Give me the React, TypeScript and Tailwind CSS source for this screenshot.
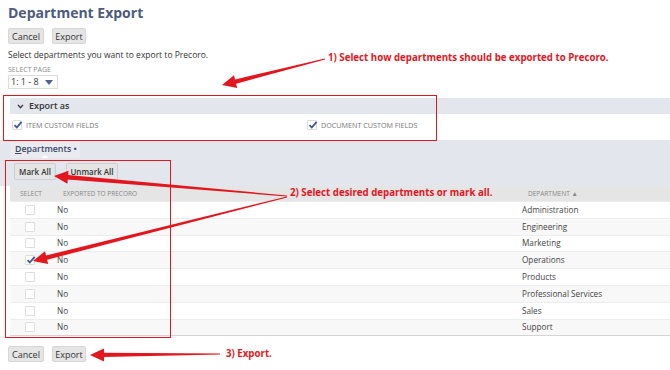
import React from 'react';

const departments = [
  'Administration',
  'Engineering',
  'Marketing',
  'Operations',
  'Products',
  'Professional Services',
  'Sales',
  'Support',
];

function Btn({ children, w }: { children: React.ReactNode; w: string }) {
  return (
    <button
      className={
        'h-[16px] rounded-[2px] bg-[#e5e5e5] border border-[#d6d6d6] text-[9px] leading-none text-[#333] flex items-center justify-center ' +
        w
      }
    >
      {children}
    </button>
  );
}

function Check({ checked }: { checked?: boolean }) {
  return (
    <span className="relative inline-block w-[10px] h-[10px] bg-white border border-[#ddd] rounded-[1px]">
      {checked && (
        <svg viewBox="0 0 10 10" className="absolute left-[0px] top-[-1px] w-[10px] h-[10px]">
          <path d="M1.5 5.2 L3.8 7.5 L8.6 1.8" fill="none" stroke="#3d5a96" strokeWidth="1.8" />
        </svg>
      )}
    </span>
  );
}

// tapered red arrow: thin at the start, thick near the head
function Arrow({ x1, y1, x2, y2 }: { x1: number; y1: number; x2: number; y2: number }) {
  const dx = x2 - x1;
  const dy = y2 - y1;
  const len = Math.hypot(dx, dy);
  const ux = dx / len;
  const uy = dy / len;
  const nx = -uy;
  const ny = ux;
  const head = 14;
  const hw = 6.5;
  const bx = x2 - ux * head;
  const by = y2 - uy * head;
  const w0 = 0.5;
  const w1 = 2.2;
  const pts = [
    [x1 + nx * w0, y1 + ny * w0],
    [bx + nx * w1, by + ny * w1],
    [bx + nx * hw, by + ny * hw],
    [x2, y2],
    [bx - nx * hw, by - ny * hw],
    [bx - nx * w1, by - ny * w1],
    [x1 - nx * w0, y1 - ny * w0],
  ]
    .map((p) => p.join(','))
    .join(' ');
  return <polygon points={pts} fill="#e3161d" />;
}

export default function App() {
  return (
    <div
      className="relative w-[670px] h-[370px] overflow-hidden bg-white text-[#333]"
      style={{ fontFamily: '"Open Sans", sans-serif' }}
    >
      <div className="pt-[3px]">
        <h1 className="pl-[8px] text-[14px] font-bold leading-[20px] text-[#4d5b7c]">Department Export</h1>
        <div className="pl-[8px] mt-[5px] flex gap-[8px]">
          <Btn w="w-[36px]">Cancel</Btn>
          <Btn w="w-[34px]">Export</Btn>
        </div>
        <p className="pl-[8px] mt-[5px] text-[8.5px] leading-[12px]">
          Select departments you want to export to Precoro.
        </p>
        <div className="pl-[8px] mt-[4px] text-[7px] leading-[9px] text-[#8a8a8a]">SELECT PAGE</div>
        <div className="ml-[8px] mt-[1px] w-[50px] h-[14px] border border-[#ddd] flex items-center justify-between pl-[2px] pr-[4px] text-[9px]">
          <span>1: 1 - 8</span>
          <svg viewBox="0 0 8 5" className="w-[8px] h-[5px]">
            <path d="M0 0 H8 L4 5 Z" fill="#4d6290" />
          </svg>
        </div>

        <div className="ml-[10px] mt-[9px] h-[16px] bg-[#e3e6ec] flex items-center pl-[7px] gap-[5px]">
          <svg viewBox="0 0 8 6" className="w-[7px] h-[5px]">
            <path d="M1 1 L4 4.5 L7 1" fill="none" stroke="#333" strokeWidth="1.6" />
          </svg>
          <span className="text-[9px] font-semibold">Export as</span>
        </div>
        <div className="h-[26px] flex pt-[6px] pl-[12px] text-[7.2px] text-[#777]">
          <div className="w-[295px] flex gap-[4px]">
            <Check checked />
            <span className="leading-[11px]">ITEM CUSTOM FIELDS</span>
          </div>
          <div className="flex gap-[4px]">
            <Check checked />
            <span className="leading-[11px]">DOCUMENT CUSTOM FIELDS</span>
          </div>
        </div>

        <div className="bg-[#e3e6ed] pt-[1px]">
          <div className="relative ml-[10px] w-[70px] h-[17px] bg-[#e9ebf0] flex items-center pl-[5px] text-[8.8px] font-semibold text-[#3b4866]">
            <span>
              <span className="underline">D</span>epartments •
            </span>
            <span className="absolute left-[31px] bottom-0 w-0 h-0 border-l-[4px] border-r-[4px] border-b-[3px] border-l-transparent border-r-transparent border-b-white" />
          </div>
          <div className="pl-[14px] pt-[5px] pb-[6px] flex gap-[10px]">
            <button className="h-[17px] w-[42px] rounded-[2px] bg-[#e5e5e5] border border-[#cfcfcf] text-[8px] font-semibold leading-none">
              Mark All
            </button>
            <button className="h-[17px] w-[52px] rounded-[2px] bg-[#e5e5e5] border border-[#cfcfcf] text-[8px] font-semibold leading-none">
              Unmark All
            </button>
          </div>
        </div>

        <div className="ml-[10px] border-b border-[#d4d4d4]">
          <div className="grid grid-cols-[47px_465px_1fr] h-[15px] items-center bg-[#e5e5e5] text-[6.5px] text-[#888]">
            <span className="pl-[10px]">SELECT</span>
            <span className="pl-[6px]">EXPORTED TO PRECORO</span>
            <span className="pl-[6px]">DEPARTMENT ▲</span>
          </div>
          {departments.map((d, i) => (
            <div
              key={d}
              className={
                'grid grid-cols-[47px_465px_1fr] h-[16.8px] items-center text-[8.2px] text-[#444] border-t border-[#ededed] ' +
                (i % 2 === 1 ? 'bg-[#f8f8f8]' : 'bg-white')
              }
            >
              <span className="pl-[15px] flex">
                <Check checked={d === 'Operations'} />
              </span>
              <span>No</span>
              <span>{d}</span>
            </div>
          ))}
        </div>

        <div className="pl-[8px] mt-[10px] flex gap-[8px]">
          <Btn w="w-[36px]">Cancel</Btn>
          <Btn w="w-[34px]">Export</Btn>
        </div>
      </div>

      {/* annotations */}
      <div className="absolute left-[3px] top-[95px] w-[434px] h-[46px] border border-[#e3161d]" />
      <div className="absolute left-[5px] top-[160px] w-[166px] h-[178px] border border-[#e3161d]" />
      <div className="absolute left-[328px] top-[51px] text-[9.7px] font-bold text-[#e3161d] whitespace-nowrap">
        1) Select how departments should be exported to Precoro.
      </div>
      <div className="absolute left-[290px] top-[186px] text-[9.7px] font-bold text-[#e3161d] whitespace-nowrap">
        2) Select desired departments or mark all.
      </div>
      <div className="absolute left-[226px] top-[347px] text-[9.7px] font-bold text-[#e3161d] whitespace-nowrap">
        3) Export.
      </div>
      <svg className="absolute left-0 top-0 w-[670px] h-[370px] pointer-events-none" viewBox="0 0 670 370">
        <Arrow x1={325} y1={59} x2={222} y2={85} />
        <Arrow x1={287} y1={196} x2={54} y2={176} />
        <Arrow x1={287} y1={197} x2={33} y2={261} />
        <Arrow x1={220} y1={354} x2={90} y2={355} />
      </svg>
    </div>
  );
}
